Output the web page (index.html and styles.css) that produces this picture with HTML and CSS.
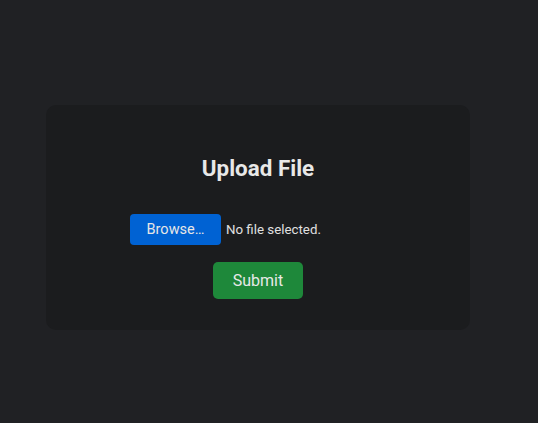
FILE: index.html
```html
<!DOCTYPE html>
<html lang="en">
<head>
<meta charset="utf-8">
<title>Upload File</title>
<link rel="stylesheet" href="styles.css">
</head>
<body>
<main class="page">
  <section class="card">
    <h2 class="title">Upload File</h2>
    <form class="form">
      <div class="file-input">
        <span class="browse-btn">Browse…</span>
        <span class="file-label">No file selected.</span>
      </div>
      <button type="button" class="submit-btn">Submit</button>
    </form>
  </section>
</main>
</body>
</html>
```
FILE: styles.css
```css
html, body {
  margin: 0;
  padding: 0;
  background: #202124;
  height: 100%;
}
.page {
  display: flex;
  align-items: flex-start;
  padding: 105px 0 0 46px;
  font-family: Roboto, "Liberation Sans", sans-serif;
  color: #e8e8e8;
}
.card {
  width: 424px;
  box-sizing: border-box;
  background: #1b1c1e;
  border-radius: 10px;
  padding: 50px 0 31px;
  display: flex;
  flex-direction: column;
  align-items: center;
}
.title {
  margin: 0;
  font-size: 22.4px;
  line-height: 26px;
  font-weight: 700;
  color: #e8e8e8;
}
.form {
  margin-top: 33px;
  display: flex;
  flex-direction: column;
  align-items: center;
  gap: 17px;
}
.file-input {
  width: 256px;
  display: flex;
  align-items: center;
  gap: 5px;
}
.browse-btn {
  width: 91px;
  height: 31px;
  box-sizing: border-box;
  background: #0062d3;
  border-radius: 4px;
  color: #e6e6e6;
  font-size: 14.5px;
  display: flex;
  align-items: center;
  justify-content: center;
}
.file-label {
  font-size: 13.3px;
  color: #e0e0e0;
}
.submit-btn {
  width: 90px;
  height: 37px;
  border: none;
  border-radius: 5px;
  background: #1e883a;
  color: #e8e8e8;
  font-family: Roboto, "Liberation Sans", sans-serif;
  font-size: 16px;
  padding: 0;
  cursor: pointer;
}
```
